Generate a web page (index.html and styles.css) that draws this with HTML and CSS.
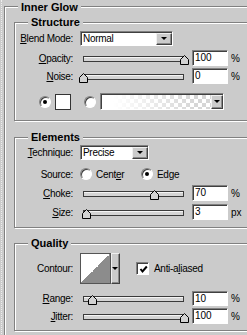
FILE: index.html
```html
<!DOCTYPE html>
<html lang="en">
<head>
  <meta charset="UTF-8" />
  <title>Inner Glow</title>
  <link rel="stylesheet" href="styles.css">
</head>
<body>
<div class="panel">
  <div class="group outer">
    <div class="group-title">Inner Glow</div>

    <div class="group sub structure">
      <div class="group-title">Structure</div>
      <div class="row row-blend">
        <div class="lbl"><u>B</u>lend Mode:</div>
        <div class="select select-blend"><span>Normal</span><div class="btn"><i class="arrow"></i></div></div>
      </div>
      <div class="row row-opacity">
        <div class="lbl"><u>O</u>pacity:</div>
        <div class="slider"><div class="track"></div><svg class="thumb" style="left:100px" width="9" height="10" viewBox="0 0 9 10"><path d="M4.5 .5L8.5 4.5V9.5H.5V4.5Z" fill="#d2d2d2" stroke="#000"/></svg></div>
        <div class="field">100</div><span class="unit">%</span>
      </div>
      <div class="row row-noise">
        <div class="lbl"><u>N</u>oise:</div>
        <div class="slider"><div class="track"></div><svg class="thumb" style="left:-1px" width="9" height="10" viewBox="0 0 9 10"><path d="M4.5 .5L8.5 4.5V9.5H.5V4.5Z" fill="#d2d2d2" stroke="#000"/></svg></div>
        <div class="field">0</div><span class="unit">%</span>
      </div>
      <div class="row row-colors">
        <div class="radio on"></div>
        <div class="swatch"></div>
        <div class="radio radio-grad"></div>
        <div class="gradient"><div class="ramp"></div><div class="btn"><i class="arrow"></i></div></div>
      </div>
    </div>

    <div class="group sub elements">
      <div class="group-title">Elements</div>
      <div class="row row-technique">
        <div class="lbl"><u>T</u>echnique:</div>
        <div class="select select-technique"><span>Precise</span><div class="btn"><i class="arrow"></i></div></div>
      </div>
      <div class="row row-source">
        <div class="lbl">Source:</div>
        <div class="opt opt-center"><div class="radio"></div><span>Cent<u>e</u>r</span></div>
        <div class="opt"><div class="radio on"></div><span>Ed<u>g</u>e</span></div>
      </div>
      <div class="row row-choke">
        <div class="lbl"><u>C</u>hoke:</div>
        <div class="slider"><div class="track"></div><svg class="thumb" style="left:70px" width="9" height="10" viewBox="0 0 9 10"><path d="M4.5 .5L8.5 4.5V9.5H.5V4.5Z" fill="#d2d2d2" stroke="#000"/></svg></div>
        <div class="field">70</div><span class="unit">%</span>
      </div>
      <div class="row row-size">
        <div class="lbl"><u>S</u>ize:</div>
        <div class="slider"><div class="track"></div><svg class="thumb" style="left:2px" width="9" height="10" viewBox="0 0 9 10"><path d="M4.5 .5L8.5 4.5V9.5H.5V4.5Z" fill="#d2d2d2" stroke="#000"/></svg></div>
        <div class="field">3</div><span class="unit">px</span>
      </div>
    </div>

    <div class="group sub quality">
      <div class="group-title">Quality</div>
      <div class="row row-contour">
        <div class="lbl">Contour:</div>
        <div class="contour"><div class="curve"></div><div class="btn"><i class="arrow"></i></div></div>
        <div class="check">
          <svg width="9" height="9" viewBox="0 0 9 9"><path d="M1.5 4L3.5 6.5L7.8 1.5" fill="none" stroke="#000" stroke-width="2"/></svg>
        </div>
        <span class="check-label">Anti-a<u>l</u>iased</span>
      </div>
      <div class="row row-range">
        <div class="lbl"><u>R</u>ange:</div>
        <div class="slider"><div class="track"></div><svg class="thumb" style="left:8px" width="9" height="10" viewBox="0 0 9 10"><path d="M4.5 .5L8.5 4.5V9.5H.5V4.5Z" fill="#d2d2d2" stroke="#000"/></svg></div>
        <div class="field">10</div><span class="unit">%</span>
      </div>
      <div class="row row-jitter">
        <div class="lbl"><u>J</u>itter:</div>
        <div class="slider"><div class="track"></div><svg class="thumb" style="left:100px" width="9" height="10" viewBox="0 0 9 10"><path d="M4.5 .5L8.5 4.5V9.5H.5V4.5Z" fill="#d2d2d2" stroke="#000"/></svg></div>
        <div class="field">100</div><span class="unit">%</span>
      </div>
    </div>

  </div>
</div>
</body>
</html>
```

FILE: styles.css
```css
html, body {
  margin: 0;
  padding: 0;
  height: 100%;
  overflow: hidden;
  background: #cbcbcb;
  font-family: "Liberation Sans", Arial, sans-serif;
  font-size: 10px;
  letter-spacing: -0.3px;
  color: #000;
}
.panel {
  margin-left: 1px;
  padding: 6px 0 0 2px;
  border-left: 1px dotted #efefef;
  min-height: 100%;
  box-sizing: border-box;
}
.group {
  border: 1px solid #808080;
  box-shadow: 1px 1px 0 #fff, inset 1px 1px 0 #fff;
}
.outer {
  width: 262px;
  height: 400px;
}
.group-title {
  display: table;
  margin: -7px 0 0 13px;
  padding: 0 3px;
  background: #cbcbcb;
  font-size: 11px;
  font-weight: bold;
  line-height: 13px;
  letter-spacing: 0;
}
.outer > .group-title {
  margin-top: -6px;
}
.sub {
  margin: 0 9px;
}
.structure {
  margin-top: 8px;
  padding-bottom: 10px;
}
.elements {
  margin-top: 16px;
  padding-bottom: 7px;
}
.quality {
  margin-top: 15px;
  padding-bottom: 6px;
}

/* rows */
.row {
  display: flex;
  align-items: center;
}
.lbl {
  flex: none;
  width: 58px;
  margin-right: 7px;
  text-align: right;
  white-space: nowrap;
}
.row-blend { height: 15px; margin-top: 2px; }
.row-opacity { height: 16px; margin-top: 4px; }
.row-noise { height: 16px; margin-top: 2px; }
.row-colors { height: 17px; margin-top: 9px; }
.row-technique { height: 15px; margin-top: 1px; }
.row-source { height: 12px; margin-top: 8px; }
.row-choke { height: 16px; margin-top: 5px; }
.row-size { height: 16px; margin-top: 3px; }
.row-contour { height: 31px; margin-top: 3px; }
.row-range { height: 16px; margin-top: 6px; }
.row-jitter { height: 16px; margin-top: 2px; }

/* sunken white boxes */
.select, .field, .gradient, .check {
  box-sizing: border-box;
  background: #fff;
  border: 1px solid;
  border-color: #808080 #fff #fff #808080;
  box-shadow: inset 1px 1px 0 #404040;
}
.select {
  display: flex;
  height: 15px;
  padding: 1px 0 0 1px;
}
.select span {
  flex: 1;
  padding-left: 1px;
  line-height: 12px;
}
.select-blend { width: 93px; }
.select-technique { width: 69px; }

.btn {
  flex: none;
  display: flex;
  align-items: center;
  justify-content: center;
  box-sizing: border-box;
  background: #cbcbcb;
  border: 1px solid;
  border-color: #f0f0f0 #404040 #404040 #f0f0f0;
  box-shadow: inset -1px -1px 0 #8a8a8a;
}
.select .btn {
  width: 16px;
}
.arrow {
  width: 0;
  height: 0;
  border-left: 3px solid transparent;
  border-right: 3px solid transparent;
  border-top: 3px solid #000;
  margin: 0 1px 1px 0;
}

/* sliders */
.slider {
  position: relative;
  flex: none;
  width: 112px;
  height: 16px;
}
.track {
  box-sizing: border-box;
  margin: 6px 0 0 3px;
  width: 101px;
  height: 6px;
  border: 1px solid #3a3a3a;
  background: #d4d4d4;
  box-shadow: inset 0 1px 0 #f4f4f4;
}
.thumb {
  position: absolute;
  top: 5px;
}
.field {
  flex: none;
  width: 36px;
  height: 16px;
  padding-left: 2px;
  line-height: 14px;
  letter-spacing: 0;
}
.row-range .field { height: 15px; line-height: 13px; }
.unit {
  margin-left: 3px;
  letter-spacing: 0;
}

/* colour choice */
.radio {
  position: relative;
  flex: none;
  box-sizing: border-box;
  width: 12px;
  height: 12px;
  border-radius: 50%;
  background: #fff;
  border: 1px solid;
  border-color: #808080 #fff #fff #808080;
  box-shadow: inset 1px 1px 0 #404040;
}
.radio.on::after {
  content: "";
  position: absolute;
  left: 3px;
  top: 3px;
  width: 4px;
  height: 4px;
  border-radius: 50%;
  background: #000;
}
.row-colors .radio:first-child {
  margin-left: 24px;
}
.swatch {
  flex: none;
  box-sizing: border-box;
  width: 16px;
  height: 16px;
  margin-left: 4px;
  background: #fff;
  border: 1px solid #333;
}
.radio-grad {
  margin-left: 13px;
}
.gradient {
  display: flex;
  width: 124px;
  height: 17px;
  margin-left: 4px;
  padding: 1px 0 0 1px;
}
.ramp {
  flex: 1;
  background:
    linear-gradient(to right, #fff 10%, rgba(255, 255, 255, 0) 85%),
    conic-gradient(#d6d6d6 25%, #fff 0 50%, #d6d6d6 0 75%, #fff 0) 0 0 / 8px 8px;
}
.gradient .btn {
  width: 12px;
}

/* source */
.opt {
  display: flex;
  align-items: center;
  gap: 4px;
}
.opt-center {
  width: 61px;
}

/* contour */
.contour {
  display: flex;
  height: 31px;
}
.curve {
  box-sizing: border-box;
  width: 31px;
  border: 1px solid #555;
  background: linear-gradient(to bottom right, #fff 50%, #8c8c8c 50%);
}
.contour .btn {
  width: 9px;
}
.check {
  flex: none;
  display: flex;
  align-items: center;
  justify-content: center;
  width: 13px;
  height: 13px;
  margin-left: 16px;
  padding: 1px 0 0 1px;
}
.check-label {
  margin-left: 5px;
}
```
